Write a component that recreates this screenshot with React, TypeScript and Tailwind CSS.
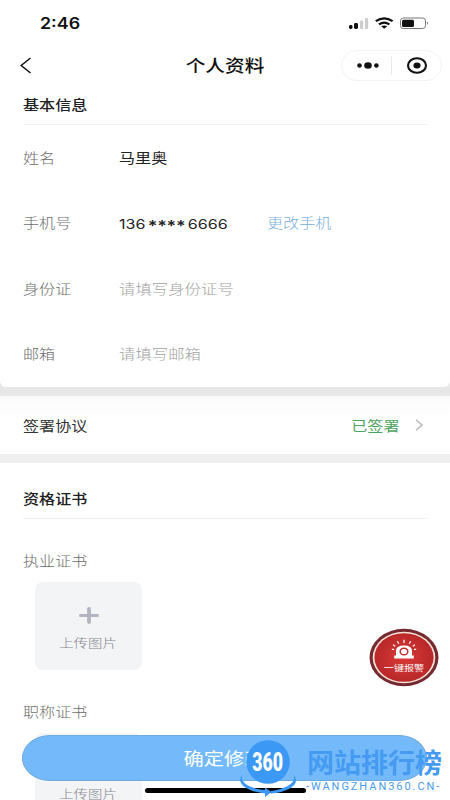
import type { ReactNode } from 'react';
import { clsx } from 'clsx';

interface TextProps {
  children: ReactNode;
  className?: string;
}

// Wide text: every label on this page uses slightly stretched glyphs
function Text({ children, className }: TextProps) {
  return (
    <span className={clsx('inline-block whitespace-nowrap', className)}>
      {children}
    </span>
  );
}

interface InfoRowProps {
  label: string;
  value: ReactNode;
  placeholder?: boolean;
  action?: string;
}

function InfoRow({ label, value, placeholder, action }: InfoRowProps) {
  return (
    <div className="flex h-[65.5px] items-center">
      <div className="w-24 shrink-0">
        <Text className="origin-left scale-x-[1.19] font-light text-[#6c6c6c]">{label}</Text>
      </div>
      <div className="w-[148px] shrink-0">
        <Text
          className={clsx(
            'origin-left',
            placeholder ? 'scale-x-[1.215] font-light text-[#a2a2a2]' : 'scale-x-[1.19] text-[#222]'
          )}
        >
          {value}
        </Text>
      </div>
      {action && <Text className="origin-left scale-x-[1.19] font-light text-[#78b0dc]">{action}</Text>}
    </div>
  );
}

function SectionTitle({ children }: { children: string }) {
  return (
    <div className="flex h-[38px] items-center border-b border-[#f1f1f1] pb-[2px]">
      <Text className="origin-left scale-x-[1.19] font-medium text-[#222]">{children}</Text>
    </div>
  );
}

function UploadTile() {
  return (
    <button className="ml-3 flex h-[88px] w-[107px] flex-col items-center rounded-[8px] bg-[#f3f4f6] pt-[25px]">
      <svg width="20" height="17" viewBox="0 0 20 17" fill="none" stroke="#b2b4bf" strokeLinecap="round">
        <path d="M1.5 8.5H18.5" strokeWidth="3" />
        <path d="M10 2V15" strokeWidth="3.8" />
      </svg>
      <Text className="mt-[9px] scale-x-[1.2] text-[12px] leading-5 font-light text-[#85878f]">上传图片</Text>
    </button>
  );
}

function StatusBar() {
  return (
    <div className="flex h-[45px] items-center justify-between pr-[21px] pl-10">
      <span className="inline-block origin-left scale-x-[1.15] pt-[2px] font-['Inter'] text-[15.5px] font-semibold text-[#111]">
        2:46
      </span>
      <svg className="mt-[1px]" width="81" height="14" viewBox="348 16 81 14">
        <rect x="349" y="25" width="3.5" height="4" rx="1.4" fill="#111" />
        <rect x="354" y="23" width="4" height="6" rx="1.4" fill="#111" />
        <rect x="360" y="20.5" width="3.2" height="8.5" rx="1" fill="#ccc" />
        <rect x="365" y="18" width="3.2" height="11" rx="1" fill="#ccc" />
        <g fill="none" stroke="#111" strokeWidth="2.2">
          <path d="M375.8 21.2Q384.2 15.6 392.6 21.2" />
          <path d="M379 24.4Q384.2 20.7 389.4 24.4" />
        </g>
        <path d="M381.2 26.3Q384.2 24.5 387.2 26.3L384.2 28.8Z" fill="#111" />
        <rect x="400.5" y="18" width="25" height="10.5" rx="2.8" fill="none" stroke="#777" />
        <rect x="402" y="19.7" width="12" height="7.2" rx="1.5" fill="#111" />
        <path d="M427 21.8Q429.3 23.3 427 24.8Z" fill="#777" />
      </svg>
    </div>
  );
}

function NavBar() {
  return (
    <div className="grid h-[41px] grid-cols-[1fr_auto_1fr] items-center pr-[8px] pl-5">
      <svg width="12" height="17" viewBox="0 0 12 17" fill="none" stroke="#111" strokeWidth="1.5">
        <path d="M10.5 1L1.2 8.5L10.5 16" />
      </svg>
      <Text className="-ml-[12px] scale-x-[1.19] text-[16.5px] font-medium text-[#111]">个人资料</Text>
      <div className="flex h-[31px] w-[101px] items-center justify-self-end rounded-full border border-[#f3f3f3]">
        <svg width="99" height="29" viewBox="0 0 99 29">
          <circle cx="17.5" cy="14.5" r="2.3" fill="#111" />
          <ellipse cx="26" cy="14.5" rx="3.8" ry="3.3" fill="#111" />
          <circle cx="34.4" cy="14.5" r="2.3" fill="#111" />
          <path d="M49.5 5.5V23.5" stroke="#e8e8e8" />
          <ellipse cx="75" cy="14.5" rx="9" ry="7.3" fill="none" stroke="#111" strokeWidth="2.1" />
          <ellipse cx="75" cy="14.5" rx="3.6" ry="3" fill="#111" />
        </svg>
      </div>
    </div>
  );
}

// Middle digits of the phone number are masked
function MaskedPhone() {
  return (
    <span className="inline-flex items-center gap-[2px] pt-[3px] font-['Inter'] text-[13.5px] leading-5">
      <span>136</span>
      <span className="pt-[5px] text-[15px] font-semibold tracking-[-0.2px]">****</span>
      <span>6666</span>
    </span>
  );
}

function AlarmButton() {
  return (
    <button className="absolute top-[628px] left-[369px] flex h-[59px] w-[70px] flex-col items-center">
      <svg className="absolute inset-0" width="70" height="59" viewBox="0 0 70 59">
        <defs>
          <radialGradient id="alarm">
            <stop offset="0" stopColor="#d93a37" />
            <stop offset="1" stopColor="#b92829" />
          </radialGradient>
        </defs>
        <ellipse cx="35" cy="29.5" rx="34.5" ry="28.7" fill="#762a30" />
        <ellipse cx="35" cy="29.5" rx="31.3" ry="25.8" fill="#f7e3d9" />
        <ellipse cx="35" cy="29.5" rx="29.6" ry="24.3" fill="url(#alarm)" />
        <path d="M27 27.5V23Q27 17.5 35 17.5T43 23V27.5H44.8V30.5H25.2V27.5Z" fill="#fff" />
        <ellipse cx="35" cy="23.5" rx="3.8" ry="3.3" fill="#fff" stroke="#c43131" strokeWidth="1.5" />
        <path
          d="M35 11.8V15M28.3 13.2L29.8 15.8M41.7 13.2L40.2 15.8M24 16.8L26.3 18.3M46 16.8L43.7 18.3M22.8 21.3H25M47.2 21.3H45"
          stroke="#fff"
          strokeWidth="1.2"
        />
      </svg>
      <Text className="relative mt-[33px] scale-x-[1.19] text-[8.5px] leading-[12px] text-white">一键报警</Text>
    </button>
  );
}

function Watermark() {
  return (
    <div className="absolute top-[738px] left-[237px] flex h-[60px] w-[210px]">
      <div className="relative flex h-[60px] w-[62px] justify-center">
        <svg className="absolute inset-0" width="62" height="60" viewBox="0 0 62 60">
          <circle cx="31" cy="24" r="21.8" fill="#3b98f5" />
          <path
            d="M5 37C-2 46 12 54 28 55.5V59L34.5 54L28 49.5V52C13 50.5 3 45 5 37Z"
            fill="#3b98f5"
          />
          <path d="M57 37C64 46 52 54 34 55.5V53C49 51 59 45 57 37Z" fill="#3b98f5" />
        </svg>
        <span className="relative mt-[9px] inline-block origin-center scale-x-[0.68] font-['Roboto'] text-[26px] leading-[30px] font-black text-white">
          360
        </span>
      </div>
      <div className="flex flex-col pl-[8px]">
        <span className="mt-[8px] text-[27px] leading-[32px] font-bold whitespace-nowrap text-[#459bf1]">
          网站排行榜
        </span>
        <span className="mt-[3px] -ml-[1px] font-['Roboto'] text-[11px] leading-3 tracking-[1.95px] whitespace-nowrap text-[#4b9aeb]">
          -WANGZHAN360.CN-
        </span>
      </div>
    </div>
  );
}

export default function App() {
  return (
    <div className="relative h-[800px] w-[450px] overflow-hidden bg-white font-['Noto_Sans_CJK_SC',sans-serif] text-[13.5px]">
      <StatusBar />
      <NavBar />

      {/* Basic info */}
      <div className="bg-[#e7e7e7]">
        <div className="h-[301px] rounded-b-[6px] bg-white px-[23px] pt-px">
          <SectionTitle>基本信息</SectionTitle>
          <div className="-mt-px">
            <InfoRow label="姓名" value="马里奥" />
            <InfoRow label="手机号" value={<MaskedPhone />} action="更改手机" />
            <InfoRow label="身份证" value="请填写身份证号" placeholder />
            <InfoRow label="邮箱" value="请填写邮箱" placeholder />
          </div>
        </div>
        <div className="h-[9px]" />
      </div>

      {/* Agreement */}
      <div className="flex h-[58px] items-center justify-between bg-gradient-to-b from-[#fafafa] to-white to-40% pr-[27px] pl-[23px]">
        <Text className="origin-left scale-x-[1.19] text-[#333]">签署协议</Text>
        <div className="flex items-center gap-[16px]">
          <Text className="origin-right scale-x-[1.19] text-[#4ca35f]">已签署</Text>
          <svg width="8" height="12" viewBox="0 0 8 12" fill="none" stroke="#bbb" strokeWidth="1.5">
            <path d="M1 .8L7 6L1 11.2" />
          </svg>
        </div>
      </div>
      <div className="h-[9px] bg-[#efefef]" />

      {/* Certificates */}
      <div className="px-[23px] pt-[18px]">
        <SectionTitle>资格证书</SectionTitle>
        <div className="mt-[31px] h-[32px] leading-5">
          <Text className="origin-left scale-x-[1.19] font-light text-[#6c6c6c]">执业证书</Text>
        </div>
        <UploadTile />
        <div className="mt-[31px] h-[32px] leading-5">
          <Text className="origin-left scale-x-[1.19] font-light text-[#6c6c6c]">职称证书</Text>
        </div>
        <UploadTile />
      </div>

      <AlarmButton />

      {/* Submit */}
      <button className="absolute top-[734.5px] left-[22px] flex h-[46.5px] w-[405px] items-center justify-center rounded-[28px/23px] border border-[#6ca9df] bg-[#74bafa]">
        <Text className="-ml-[2px] scale-x-[1.19] text-[17px] text-white">确定修改</Text>
      </button>
      <div className="absolute top-[787.5px] left-[145px] h-[5px] w-[161px] rounded-full bg-black" />
      <Watermark />
    </div>
  );
}
